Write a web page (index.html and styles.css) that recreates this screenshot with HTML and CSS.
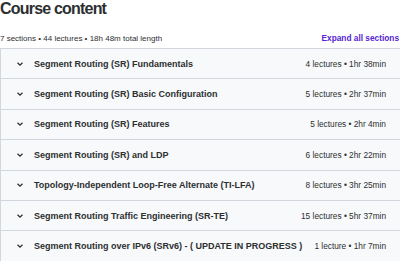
FILE: index.html
```html
<!DOCTYPE html>
<html>
	<head>
		<meta charset="UTF-8">
		<title>Course content</title>
		<link rel="stylesheet" href="styles.css">
	</head>
	<body>
		<div class="content">
			<h2 class="heading">Course content</h2>
			<div class="summary">
				<span class="stats">7 sections • 44 lectures • 18h 48m total length</span>
				<a class="expand" href="">Expand all sections</a>
			</div>
			<div class="sections">
				<div class="section">
					<span class="chevron"><svg width="8" height="6" viewBox="0 0 8 6"><path d="M1.5 1.8 L4 4.2 L6.5 1.8" fill="none" stroke="#2d2f31" stroke-width="1.3"/></svg></span>
					<span class="name">Segment Routing (SR) Fundamentals</span>
					<span class="meta">4 lectures • 1hr 38min</span>
				</div>
				<div class="section">
					<span class="chevron"><svg width="8" height="6" viewBox="0 0 8 6"><path d="M1.5 1.8 L4 4.2 L6.5 1.8" fill="none" stroke="#2d2f31" stroke-width="1.3"/></svg></span>
					<span class="name">Segment Routing (SR) Basic Configuration</span>
					<span class="meta">5 lectures • 2hr 37min</span>
				</div>
				<div class="section">
					<span class="chevron"><svg width="8" height="6" viewBox="0 0 8 6"><path d="M1.5 1.8 L4 4.2 L6.5 1.8" fill="none" stroke="#2d2f31" stroke-width="1.3"/></svg></span>
					<span class="name">Segment Routing (SR) Features</span>
					<span class="meta">5 lectures • 2hr 4min</span>
				</div>
				<div class="section">
					<span class="chevron"><svg width="8" height="6" viewBox="0 0 8 6"><path d="M1.5 1.8 L4 4.2 L6.5 1.8" fill="none" stroke="#2d2f31" stroke-width="1.3"/></svg></span>
					<span class="name">Segment Routing (SR) and LDP</span>
					<span class="meta">6 lectures • 2hr 22min</span>
				</div>
				<div class="section">
					<span class="chevron"><svg width="8" height="6" viewBox="0 0 8 6"><path d="M1.5 1.8 L4 4.2 L6.5 1.8" fill="none" stroke="#2d2f31" stroke-width="1.3"/></svg></span>
					<span class="name">Topology-Independent Loop-Free Alternate (TI-LFA)</span>
					<span class="meta">8 lectures • 3hr 25min</span>
				</div>
				<div class="section">
					<span class="chevron"><svg width="8" height="6" viewBox="0 0 8 6"><path d="M1.5 1.8 L4 4.2 L6.5 1.8" fill="none" stroke="#2d2f31" stroke-width="1.3"/></svg></span>
					<span class="name">Segment Routing Traffic Engineering (SR-TE)</span>
					<span class="meta">15 lectures • 5hr 37min</span>
				</div>
				<div class="section">
					<span class="chevron"><svg width="8" height="6" viewBox="0 0 8 6"><path d="M1.5 1.8 L4 4.2 L6.5 1.8" fill="none" stroke="#2d2f31" stroke-width="1.3"/></svg></span>
					<span class="name">Segment Routing over IPv6 (SRv6) - ( UPDATE IN PROGRESS )</span>
					<span class="meta">1 lecture • 1hr 7min</span>
				</div>
			</div>
		</div>
	</body>
</html>
```

FILE: styles.css
```css
body{
	margin: 0;
	background: #ffffff;
	font-family: "Liberation Sans", Arial, sans-serif;
	color: #2d2f31;
	overflow: hidden;
}
.content{
	width: 400px;
}
.heading{
	margin: 0;
	font-size: 16px;
	line-height: 18px;
	font-weight: bold;
	letter-spacing: -0.8px;
}
.summary{
	display: flex;
	justify-content: space-between;
	align-items: center;
	margin-top: 13px;
	height: 14px;
	font-size: 8px;
}
.stats{
	color: #2d2f31;
}
.expand{
	color: #5624d0;
	font-weight: bold;
	font-size: 8.3px;
	text-decoration: none;
	margin-right: 1px;
}
.sections{
	margin-top: 3px;
	border-top: 1px solid #d1d7dc;
	border-left: 1px solid #d1d7dc;
}
.section{
	display: flex;
	align-items: center;
	height: 29.4px;
	background: #f7f9fa;
	border-bottom: 1px solid #d1d7dc;
	padding: 0 14px 0 15px;
}
.chevron{
	display: flex;
	width: 18px;
}
.name{
	flex: 1;
	font-size: 9px;
	font-weight: bold;
	white-space: nowrap;
}
.meta{
	font-size: 8.3px;
	color: #2d2f31;
	white-space: nowrap;
	margin-left: 10px;
}
```
